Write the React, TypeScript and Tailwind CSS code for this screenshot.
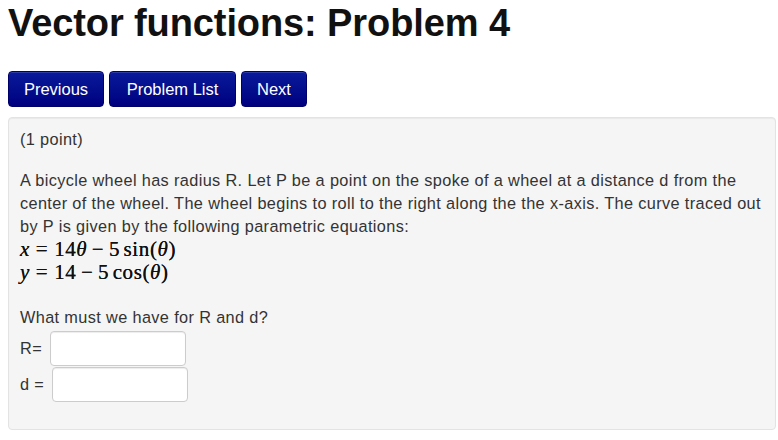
import React from "react";

const Btn = ({ children, w }: { children: React.ReactNode; w: string }) => (
  <button
    className={`${w} h-[36px] rounded-[4px] text-white text-[16.5px] leading-none bg-gradient-to-b from-[#0a1a9a] to-[#000080] border border-[#00006a] shadow-[inset_0_1px_0_rgba(255,255,255,0.15)]`}
  >
    {children}
  </button>
);

const M = ({ children }: { children: React.ReactNode }) => (
  <span className="italic">{children}</span>
);

export default function App() {
  return (
    <div className="pl-2 pr-[2px] font-['Liberation_Sans',Arial,sans-serif] text-[#333] bg-white min-h-[440px]">
      <h1 className="pt-[2px] text-[38px] font-bold leading-[42px] text-[#111] tracking-[-0.1px]">
        Vector functions: Problem 4
      </h1>
      <div className="mt-[27px] flex gap-[5px]">
        <Btn w="w-[96px]">Previous</Btn>
        <Btn w="w-[127px]">Problem List</Btn>
        <Btn w="w-[66px]">Next</Btn>
      </div>
      <div className="mt-[10px] h-[313px] rounded-[4px] border border-[#e3e3e3] bg-[#f5f5f5] shadow-[inset_0_1px_1px_rgba(0,0,0,0.05)] px-[11px] pt-[10px] text-[16.3px] tracking-[0.37px] leading-[23px]">
        <div>(1 point)</div>
        <div className="mt-[18px]">
          A bicycle wheel has radius R. Let P be a point on the spoke of a wheel at a distance d from the center of the wheel. The wheel begins to roll to the right along the the x-axis. The curve traced out by P is given by the following parametric equations:
        </div>
        <div className="font-['Liberation_Serif',serif] text-[21px] tracking-[0.6px] leading-[23px] text-[#111] [text-shadow:0_0_0.5px_#111]">
          <div>
            <M>x</M>
            <span className="mx-[0.28em]">=</span>14<M>θ</M>
            <span className="mx-[0.22em]">−</span>5<span className="ml-[0.17em]">sin(</span>
            <M>θ</M>)
          </div>
          <div>
            <M>y</M>
            <span className="mx-[0.28em]">=</span>14
            <span className="mx-[0.22em]">−</span>5<span className="ml-[0.17em]">cos(</span>
            <M>θ</M>)
          </div>
        </div>
        <div className="mt-[22px]">What must we have for R and d?</div>
        <div className="mt-[2px] flex items-center gap-[8px]">
          <span>R=</span>
          <input className="w-[136px] h-[35px] bg-white border border-[#ccc] rounded-[4px] shadow-[inset_0_1px_1px_rgba(0,0,0,0.075)]" />
        </div>
        <div className="mt-[1px] flex items-center gap-[8px]">
          <span>d =</span>
          <input className="w-[136px] h-[35px] bg-white border border-[#ccc] rounded-[4px] shadow-[inset_0_1px_1px_rgba(0,0,0,0.075)]" />
        </div>
      </div>
    </div>
  );
}
